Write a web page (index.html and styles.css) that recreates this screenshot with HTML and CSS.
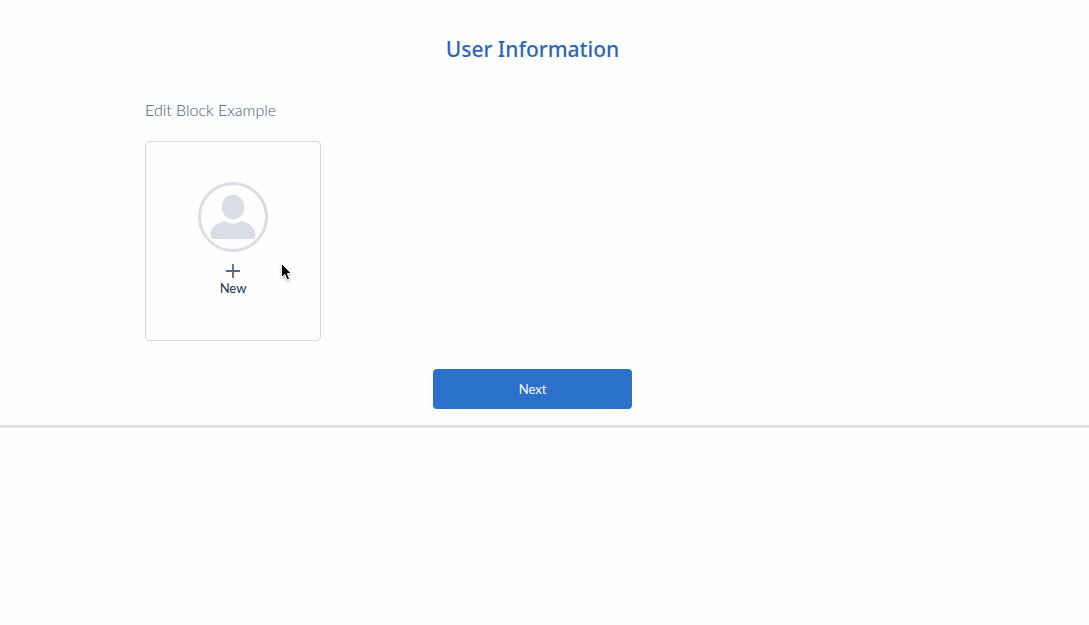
FILE: index.html
```html
<!DOCTYPE html>
<html lang="en">
<head>
<meta charset="utf-8">
<meta name="viewport" content="width=device-width, initial-scale=1">
<title>User Information</title>
<link rel="stylesheet" href="styles.css">
</head>
<body>
<main class="step">
  <h1 class="step-title">User Information</h1>
  <section class="block">
    <h2 class="block-label">Edit Block Example</h2>
    <button class="card" type="button">
      <svg class="avatar" viewBox="0 0 70 70" aria-hidden="true">
        <circle cx="35" cy="35" r="33.5" fill="none" stroke="#d8dde6" stroke-width="3"/>
        <ellipse cx="35" cy="25" rx="11.2" ry="12.3" fill="#d8dde6"/>
        <path d="M26.500 39Q35 44.500 43.500 39C51 41.500 57.500 45 57.500 53Q57.500 57 54.500 57H15.500Q12.500 57 12.500 53C12.500 45 19 41.500 26.500 39Z" fill="#d8dde6"/>
      </svg>
      <svg class="plus" viewBox="0 0 14 14" aria-hidden="true">
        <path d="M7 0.500V13.500M0.500 7H13.500" stroke="#54698d" stroke-width="1.800" stroke-linecap="round"/>
      </svg>
      <span class="card-label">New</span>
      <svg class="cursor" viewBox="0 0 14 20" aria-hidden="true">
        <path d="M1.500 1.500V15.500L4.800 12.500L7 18L9.600 16.800L7.400 11.600H11.500Z" fill="#000" stroke="#fff" stroke-width="1"/>
      </svg>
    </button>
  </section>
  <button class="next" type="button">Next</button>
</main>
</body>
</html>
```
FILE: styles.css
```css
* {
  box-sizing: border-box;
}

body {
  margin: 0;
  background: #fefefe;
  color: #16325c;
  font-family: Lato, "Liberation Sans", sans-serif;
}

.step {
  display: flex;
  flex-direction: column;
  align-items: center;
  padding: 34px 24px 17px 0;
  border-bottom: 2px solid #e3e3e3;
  box-shadow: inset 0 -1px #d9d9d9;
}

.step-title {
  margin: 0;
  color: #2a66b8;
  font: 500 21px/30px "Noto Sans", sans-serif;
}

.block {
  width: 100%;
  max-width: 775px;
  padding: 36px 0 28px;
}

.block-label {
  margin: 0 0 22px;
  color: #44597f;
  font-size: 16px;
  font-weight: 300;
  line-height: 19px;
}

.card {
  position: relative;
  display: flex;
  flex-direction: column;
  align-items: center;
  width: 176px;
  height: 200px;
  padding: 40px 0 0;
  border: 1px solid #d8d8d8;
  border-radius: 4px;
  background: #fefefe;
  color: #16325c;
  font: 400 13px/18px Lato, "Liberation Sans", sans-serif;
}

.avatar {
  width: 70px;
  height: 70px;
}

.plus {
  width: 14px;
  height: 14px;
  margin: 12px 0 1px;
}

.cursor {
  position: absolute;
  top: 120px;
  left: 134px;
  width: 14px;
  height: 20px;
  filter: drop-shadow(0 1px 1px rgba(0, 0, 0, 0.3));
}

.next {
  width: 199px;
  height: 40px;
  border: 0;
  border-radius: 4px;
  background: #2b71cc;
  color: #fff;
  font: 400 13px/20px Lato, "Liberation Sans", sans-serif;
}
```
